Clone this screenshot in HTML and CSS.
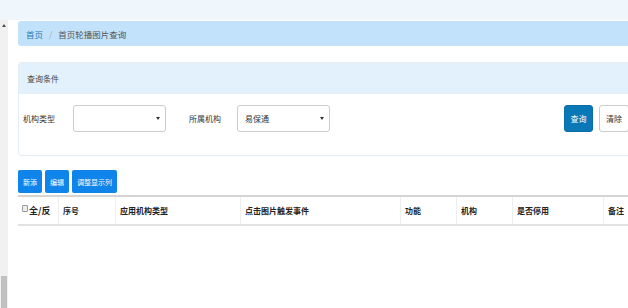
FILE: index.html
```html
<!DOCTYPE html>
<html lang="zh-CN">
<head>
    <meta charset="UTF-8">
    <title>首页轮播图片查询</title>
    <link rel="stylesheet" href="styles.css">
</head>
<body>
    <div class="topbar"></div>
    <div class="frame">
        <div class="scrollbar">
            <span class="arrow-up"></span>
            <span class="thumb"></span>
        </div>
        <div class="content">
            <div class="breadcrumb">
                <a href="#">首页</a>
                <span class="sep">/</span>
                <span class="current">首页轮播图片查询</span>
            </div>

            <div class="panel">
                <div class="panel-heading">查询条件</div>
                <div class="panel-body">
                    <label class="field-label">机构类型</label>
                    <div class="select-box">
                        <select>
                            <option></option>
                        </select>
                    </div>
                    <label class="field-label second">所属机构</label>
                    <div class="select-box">
                        <select>
                            <option>易保通</option>
                        </select>
                    </div>
                    <div class="actions">
                        <button class="btn btn-query">查询</button>
                        <button class="btn btn-clear">清除</button>
                    </div>
                </div>
            </div>

            <div class="toolbar">
                <button class="btn-tool">新添</button>
                <button class="btn-tool">编辑</button>
                <button class="btn-tool">调整显示列</button>
            </div>

            <table class="grid">
                <thead>
                    <tr>
                        <th class="col-check"><input type="checkbox">全/反</th>
                        <th class="col-no">序号</th>
                        <th class="col-type">应用机构类型</th>
                        <th class="col-event">点击图片触发事件</th>
                        <th class="col-func">功能</th>
                        <th class="col-org">机构</th>
                        <th class="col-stop">是否停用</th>
                        <th>备注</th>
                    </tr>
                </thead>
                <tbody></tbody>
            </table>
        </div>
    </div>
</body>
</html>
```

FILE: styles.css
```css
body {
  margin: 0;
  overflow: hidden;
  background-color: #fff;
  font-family: "Noto Sans CJK SC", "Liberation Sans", sans-serif;
  font-size: 8px;
  color: #333;
}

.topbar {
  height: 20px;
  background-color: #eff7fd;
}

.frame {
  display: flex;
  height: 288px;
}

.scrollbar {
  width: 8px;
  flex-shrink: 0;
  background-color: #f1f1f1;
  display: flex;
  flex-direction: column;
  align-items: center;
}

.arrow-up {
  margin-top: 4px;
  width: 0;
  height: 0;
  border-left: 2px solid transparent;
  border-right: 2px solid transparent;
  border-bottom: 3px solid #505050;
}

.thumb {
  margin-top: auto;
  width: 6px;
  height: 32px;
  background-color: #c1c1c1;
}

.content {
  width: 622px;
  flex-shrink: 0;
  margin-left: 10px;
}

.breadcrumb {
  margin-top: 1px;
  height: 25px;
  display: flex;
  align-items: center;
  padding-left: 8px;
  background-color: #c2e2fb;
  border-radius: 3px 0 0 3px;
  font-size: 8.5px;
}

.breadcrumb a {
  color: #2a78b5;
  text-decoration: none;
}

.breadcrumb .sep {
  color: #aaa;
  margin: 0 6px;
}

.breadcrumb .current {
  color: #555;
}

.panel {
  margin-top: 16px;
  border: 1px solid #e6eef5;
  border-radius: 3px;
}

.panel-heading {
  height: 31px;
  line-height: 31px;
  padding-left: 8px;
  background-color: #e3f1fc;
  color: #444;
}

.panel-body {
  display: flex;
  align-items: center;
  padding: 11px 10px 23px 4px;
}

.field-label {
  width: 50px;
  color: #333;
}

.field-label.second {
  margin-left: 23px;
  width: 48px;
}

.select-box {
  position: relative;
  width: 93px;
  height: 27px;
}

.select-box select {
  appearance: none;
  width: 100%;
  height: 100%;
  box-sizing: border-box;
  border: 1px solid #ccc;
  border-radius: 3px;
  background-color: #fff;
  padding: 0 0 0 7px;
  font-family: inherit;
  font-size: 8px;
  color: #333;
}

.select-box::after {
  content: "";
  position: absolute;
  right: 6px;
  top: 12px;
  border-left: 2px solid transparent;
  border-right: 2px solid transparent;
  border-top: 3px solid #333;
}

.actions {
  margin-left: auto;
  display: flex;
  gap: 6px;
}

.btn {
  height: 27px;
  width: 29px;
  padding: 0;
  border-radius: 3px;
  font-family: inherit;
  font-size: 8px;
  cursor: pointer;
}

.btn-query {
  border: 1px solid #0a6fa9;
  background-color: #0a78b7;
  color: #fff;
}

.btn-clear {
  width: 30px;
  border: 1px solid #ccc;
  background-color: #fff;
  color: #333;
}

.toolbar {
  margin-top: 14px;
  display: flex;
  gap: 3px;
}

.btn-tool {
  height: 23px;
  padding: 0 5px;
  border: none;
  border-radius: 2px;
  background-color: #0f84eb;
  color: #fff;
  font-family: inherit;
  font-size: 7px;
  cursor: pointer;
}

.grid {
  margin-top: 2px;
  width: 100%;
  border-collapse: collapse;
  border-top: 2px solid #d4d4d4;
  border-bottom: 2px solid #e2e2e2;
}

.grid th {
  height: 27px;
  padding: 0 0 0 4px;
  text-align: left;
  font-weight: bold;
  color: #222;
  border-left: 1px solid #eee;
}

.grid th:first-child {
  border-left: none;
  font-size: 9px;
}

.grid th input {
  appearance: none;
  width: 6px;
  height: 7px;
  margin: 0 1px 0 0;
  vertical-align: 2px;
  border: 1px solid #999;
  border-radius: 1px;
  background-color: #eee;
}

.col-check { width: 36px; }
.col-no { width: 52px; }
.col-type { width: 120px; }
.col-event { width: 155px; }
.col-func { width: 51px; }
.col-org { width: 51px; }
.col-stop { width: 86px; }
```
